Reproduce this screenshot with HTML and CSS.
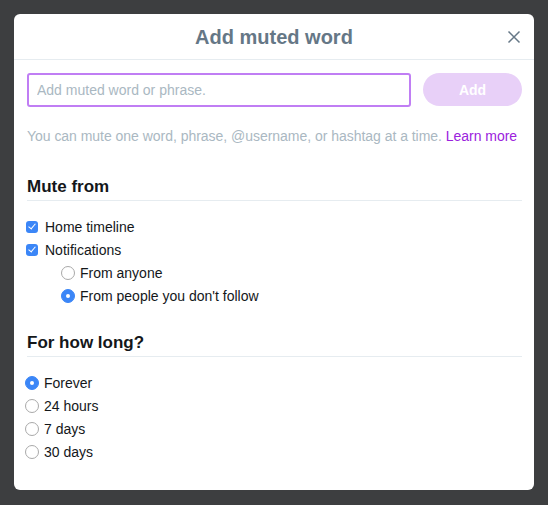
FILE: index.html
```html
<!DOCTYPE html>
<html>
<head>
<meta charset="utf-8">
<link rel="stylesheet" href="styles.css">
</head>
<body>
<div class="modal">
  <div class="header">
    <h1 class="title">Add muted word</h1>
    <button class="close" aria-label="Close">
      <svg width="14" height="14" viewBox="0 0 14 14"><path d="M1.5 1.5 L12.5 12.5 M12.5 1.5 L1.5 12.5" stroke="#657786" stroke-width="1.5" fill="none"/></svg>
    </button>
  </div>
  <div class="body">
    <div class="entry">
      <input class="word" type="text" placeholder="Add muted word or phrase.">
      <button class="add">Add</button>
    </div>
    <p class="help">You can mute one word, phrase, @username, or hashtag at a time. <a class="learn">Learn more</a></p>

    <h2 class="section">Mute from</h2>
    <div class="options">
      <label class="row"><span class="box checked"></span>Home timeline</label>
      <label class="row"><span class="box checked"></span>Notifications</label>
      <label class="row sub"><span class="radio"></span>From anyone</label>
      <label class="row sub"><span class="radio on"></span>From people you don't follow</label>
    </div>

    <h2 class="section second">For how long?</h2>
    <div class="options">
      <label class="row"><span class="radio on"></span>Forever</label>
      <label class="row"><span class="radio"></span>24 hours</label>
      <label class="row"><span class="radio"></span>7 days</label>
      <label class="row"><span class="radio"></span>30 days</label>
    </div>
  </div>
</div>
</body>
</html>
```
FILE: styles.css
```css
html, body {
  margin: 0;
  padding: 0;
  background: #3d3e40;
  font-family: "Liberation Sans", Arial, sans-serif;
}
.modal {
  margin: 14px;
  width: 520px;
  height: 476px;
  background: #fff;
  border-radius: 6px;
  box-sizing: border-box;
}
.header {
  height: 46px;
  border-bottom: 1px solid #e6ecf0;
  display: flex;
  align-items: center;
  justify-content: center;
  position: relative;
  box-sizing: border-box;
}
.title {
  margin: 0;
  font-size: 20px;
  font-weight: bold;
  color: #657786;
  line-height: 46px;
}
.close {
  position: absolute;
  right: 13px;
  top: 16px;
  width: 14px;
  height: 14px;
  padding: 0;
  border: 0;
  background: none;
  display: flex;
}
.body {
  padding: 13px 12px 0 13px;
}
.entry {
  display: flex;
  align-items: center;
  gap: 12px;
}
.word {
  width: 384px;
  height: 34px;
  box-sizing: border-box;
  border: 2px solid #c07ef4;
  border-radius: 3px;
  padding: 0 8px;
  font-family: "Liberation Sans", Arial, sans-serif;
  font-size: 14px;
  outline: none;
  margin: 0;
}
.word::placeholder {
  color: #aab8c2;
}
.add {
  width: 99px;
  height: 33px;
  border: 0;
  border-radius: 17px;
  background: #e8d0f8;
  color: #fff;
  font-family: "Liberation Sans", Arial, sans-serif;
  font-size: 14px;
  font-weight: bold;
  margin-top: -1px;
}
.help {
  margin: 20px 0 0;
  font-size: 14px;
  line-height: 18px;
  color: #aab8c2;
  white-space: nowrap;
  letter-spacing: -0.03px;
}
.learn {
  color: #9b22dd;
}
.section {
  margin: 32px 0 0;
  font-size: 17px;
  font-weight: bold;
  color: #14171a;
  line-height: 20px;
  padding-bottom: 3px;
  border-bottom: 1px solid #e6ecf0;
}
.section.second {
  margin-top: 26px;
}
.options {
  margin-top: 14px;
  display: flex;
  flex-direction: column;
}
.row {
  height: 23px;
  display: flex;
  align-items: center;
  font-size: 14px;
  color: #14171a;
}
.row.sub {
  padding-left: 36px;
}
.box {
  width: 12px;
  height: 12px;
  border-radius: 3px;
  background: #3b86f7;
  margin-left: -1px;
  margin-right: 7px;
  position: relative;
  flex: none;
}
.box.checked::after {
  content: "";
  position: absolute;
  left: 4px;
  top: 1.5px;
  width: 3px;
  height: 6px;
  border: solid #fff;
  border-width: 0 1.5px 1.5px 0;
  transform: rotate(40deg);
}
.radio {
  width: 14px;
  height: 14px;
  border-radius: 50%;
  border: 1px solid #a9a9a9;
  box-sizing: border-box;
  background: #fff;
  margin-left: -2px;
  margin-right: 5px;
  position: relative;
  flex: none;
}
.radio.on {
  background: #3b86f7;
  border-color: #3b86f7;
}
.radio.on::after {
  content: "";
  position: absolute;
  left: 4px;
  top: 4px;
  width: 4px;
  height: 4px;
  border-radius: 50%;
  background: #fff;
}
```
